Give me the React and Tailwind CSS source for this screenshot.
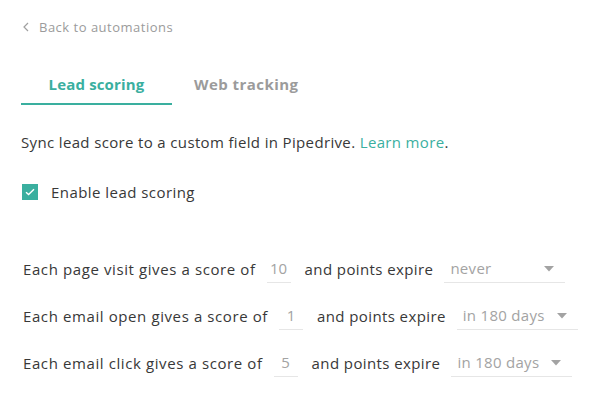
import React, { useState } from "react";

const rows = [
    { label: "Each page visit gives a score of", score: "10", expire: "never" },
    { label: "Each email open gives a score of", score: "1", expire: "in 180 days" },
    { label: "Each email click gives a score of", score: "5", expire: "in 180 days" },
];

function Caret() {
    return (
        <svg width="10" height="6" viewBox="0 0 10 6" className="shrink-0">
            <path d="M0 0h10L5 5.5z" fill="#a3a3a3" />
        </svg>
    );
}

export default function App() {
    const [enabled, setEnabled] = useState(true);

    return (
        <div className="w-[600px] h-[411px] bg-white text-[#383838] font-['Open_Sans',sans-serif] pl-[21px] pt-[17px]">
            {/* Back link */}
            <div className="flex items-center gap-[9px] text-[13px] leading-[20px] tracking-[0.5px] text-[#9b9b9b]">
                <svg width="8" height="10" viewBox="0 0 8 10" className="ml-[1px]">
                    <path d="M6 1L2 5l4 4" fill="none" stroke="#a0a0a0" strokeWidth="1.2" />
                </svg>
                <span>Back to automations</span>
            </div>

            {/* Tabs */}
            <div className="flex mt-[36px] text-[15px] leading-[22px] font-bold">
                <div className="w-[151px] text-center text-[#3aaf9f] pb-[8px] border-b-2 border-[#3aaf9f] tracking-[0.15px]">
                    Lead scoring
                </div>
                <div className="ml-[22px] text-[#9b9b9b] tracking-[0.45px]">Web tracking</div>
            </div>

            {/* Description */}
            <p className="mt-[26px] text-[15px] leading-[22px] tracking-[0.35px]">
                Sync lead score to a custom field in Pipedrive.{" "}
                <span className="text-[#3aaf9f]">Learn more</span>.
            </p>

            {/* Checkbox */}
            <label className="flex items-center gap-[13px] mt-[28px] text-[15px] leading-[22px] tracking-[0.45px]">
                <button
                    type="button"
                    onClick={() => setEnabled(!enabled)}
                    className="w-[16px] h-[16px] bg-[#3aaf9f] flex items-center justify-center ml-[1px]"
                >
                    {enabled && (
                        <svg width="10" height="8" viewBox="0 0 10 8">
                            <path d="M1 4.2l2.6 2.4L9 1.2" fill="none" stroke="#fff" strokeWidth="1.4" />
                        </svg>
                    )}
                </button>
                <span>Enable lead scoring</span>
            </label>

            {/* Score rows */}
            <div className="mt-[52px] flex flex-col gap-[19px] text-[15px]">
                {rows.map((r) => (
                    <div key={r.label} className="flex items-center h-[28px]">
                        <span className="ml-[2px] tracking-[0.6px]">{r.label}</span>
                        <div className="ml-[11px] w-[24px] h-[28px] border-b border-[#e6e6e6] flex items-center justify-center text-[#a3a3a3]">
                            {r.score}
                        </div>
                        <span className="ml-[14px] tracking-[0.4px]">and points expire</span>
                        <div className="ml-[11px] w-[121px] h-[28px] border-b border-[#e6e6e6] flex items-center justify-between pl-[6px] pr-[11px] text-[#a3a3a3]">
                            <span className="tracking-[0.3px]">{r.expire}</span>
                            <Caret />
                        </div>
                    </div>
                ))}
            </div>
        </div>
    );
}
